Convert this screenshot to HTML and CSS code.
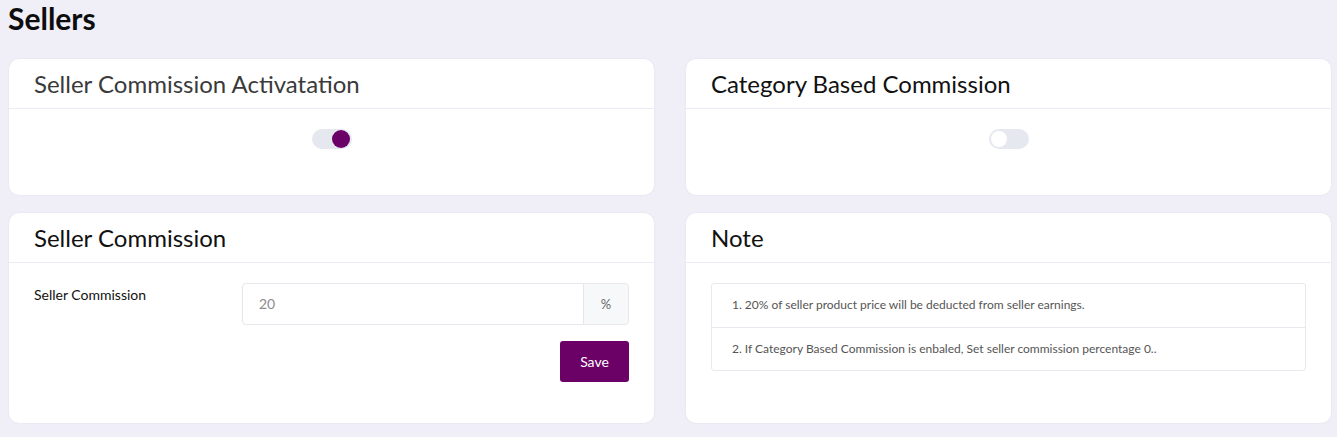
FILE: index.html
```html
<!DOCTYPE html>
<html>
<head>
<meta charset="utf-8">
<link rel="stylesheet" href="styles.css">
</head>
<body>
<h1 class="page-title">Sellers</h1>
<div class="grid">
  <div class="card">
    <div class="card-header light">Seller Commission Activatation</div>
    <div class="card-body center">
      <span class="toggle on"><span class="knob"></span></span>
    </div>
  </div>
  <div class="card">
    <div class="card-header">Category Based Commission</div>
    <div class="card-body center">
      <span class="toggle"><span class="knob"></span></span>
    </div>
  </div>
  <div class="card">
    <div class="card-header">Seller Commission</div>
    <div class="card-body form">
      <div class="form-row">
        <label class="label">Seller Commission</label>
        <div class="input-group">
          <span class="input">20</span>
          <span class="addon">%</span>
        </div>
      </div>
      <div class="actions"><button class="btn">Save</button></div>
    </div>
  </div>
  <div class="card">
    <div class="card-header">Note</div>
    <div class="card-body form">
      <ul class="list">
        <li>1. 20% of seller product price will be deducted from seller earnings.</li>
        <li>2. If Category Based Commission is enbaled, Set seller commission percentage 0..</li>
      </ul>
    </div>
  </div>
</div>
</body>
</html>
```
FILE: styles.css
```css
* { box-sizing: border-box; }
html, body { margin: 0; padding: 0; }
body {
  background: #f0eef7;
  font-family: Lato, "Open Sans", sans-serif;
  color: #111;
  width: 1337px;
  height: 437px;
  overflow: hidden;
}
.page-title {
  margin: 0;
  padding: 0 0 0 8px;
  height: 59px;
  font-size: 30px;
  font-weight: 700;
  color: #0d0d0d;
  line-height: 36px;
}
.grid {
  display: grid;
  grid-template-columns: 645px 645px;
  grid-template-rows: 136px 210px;
  column-gap: 32px;
  row-gap: 18px;
  padding-left: 9px;
}
.card {
  background: #fff;
  border-radius: 10px;
  box-shadow: 0 0 2px rgba(120, 110, 160, 0.12);
  display: flex;
  flex-direction: column;
}
.card-header {
  height: 50px;
  padding: 10px 25px 0;
  font-size: 24px;
  line-height: 30px;
  color: #111;
  border-bottom: 1px solid #eceaf2;
}
.card-header.light { color: #3a3a3a; }
.card-body { flex: 1; }
.card-body.center {
  display: flex;
  justify-content: center;
  padding-top: 20px;
}
.toggle {
  display: block;
  width: 40px;
  height: 20px;
  border-radius: 10px;
  background: #e6e8f0;
  position: relative;
}
.toggle .knob {
  position: absolute;
  top: 2px;
  left: 2px;
  width: 16px;
  height: 16px;
  border-radius: 50%;
  background: #fff;
}
.toggle.on .knob {
  left: 20px;
  top: 1px;
  width: 18px;
  height: 18px;
  background: #6b0067;
}
.card-body.form { padding: 20px 25px 0; }
.form-row {
  display: grid;
  grid-template-columns: 208px 1fr;
}
.label {
  font-size: 14px;
  color: #111;
  padding-top: 3px;
}
.input-group {
  display: flex;
  height: 42px;
  border: 1px solid #e6e6ec;
  border-radius: 4px;
  width: 387px;
}
.input {
  flex: 1;
  padding: 0 16px;
  line-height: 40px;
  font-size: 14px;
  color: #8c8c8c;
}
.addon {
  width: 45px;
  border-left: 1px solid #e6e6ec;
  background: #f7f8fa;
  text-align: center;
  line-height: 40px;
  font-size: 13px;
  color: #666;
  border-radius: 0 4px 4px 0;
}
.actions {
  display: flex;
  justify-content: flex-end;
  margin-top: 16px;
  width: 595px;
}
.btn {
  width: 69px;
  height: 41px;
  border: none;
  border-radius: 3px;
  background: #6b0067;
  color: #fff;
  font-family: Lato, sans-serif;
  font-size: 14px;
}
.list {
  list-style: none;
  margin: 0;
  padding: 0;
  border: 1px solid #e8e8ee;
  border-radius: 3px;
  width: 595px;
}
.list li {
  height: 43px;
  line-height: 42px;
  padding-left: 20px;
  font-size: 12px;
  color: #555;
}
.list li + li { border-top: 1px solid #e8e8ee; }
```
